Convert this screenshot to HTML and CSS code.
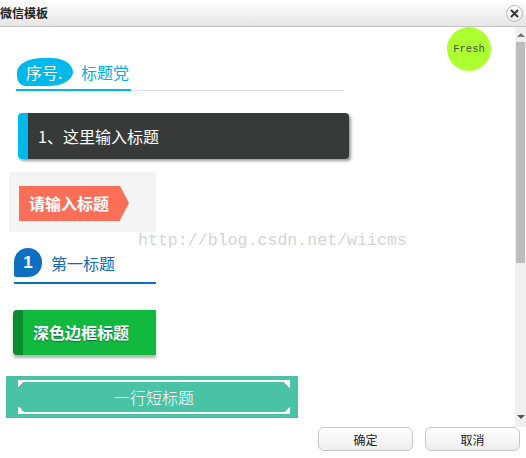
FILE: index.html
```html
<!DOCTYPE html>
<html lang="zh">

<head>
    <meta charset="UTF-8">
    <title>微信模板</title>
    <link rel="stylesheet" href="styles.css">
</head>

<body>
    <div class="dialog">
        <!-- 标题栏 -->
        <div class="dialog-head">
            <h3 class="dialog-title">微信模板</h3>
            <button type="button" class="btn-close">
                <svg width="9" height="9" viewBox="0 0 9 9">
                    <path d="M1.5 1.5 L7.5 7.5 M7.5 1.5 L1.5 7.5" stroke="#333" stroke-width="2" stroke-linecap="round" />
                </svg>
            </button>
        </div>

        <div class="dialog-body">
            <div class="content">
                <span class="fresh">Fresh</span>
                <span class="watermark">http://blog.csdn.net/wiicms</span>

                <!-- 序号 + 标题 -->
                <div class="tpl-num">
                    <div class="tpl-num-head">
                        <span class="tpl-num-pill">序号.</span>
                        <span class="tpl-num-text">标题党</span>
                    </div>
                </div>

                <!-- 深色标题 -->
                <div class="tpl-dark">1、这里输入标题</div>

                <!-- 箭头标签 -->
                <div class="tpl-tag">
                    <span class="tpl-tag-label">请输入标题</span>
                </div>

                <!-- 数字标题 -->
                <div class="tpl-first">
                    <span class="tpl-first-badge">1</span>
                    <span class="tpl-first-text">第一标题</span>
                </div>

                <!-- 深色边框标题 -->
                <div class="tpl-green">深色边框标题</div>

                <!-- 一行短标题 -->
                <div class="tpl-line">
                    <div class="tpl-line-frame">一行短标题</div>
                </div>
            </div>

            <!-- 滚动条 -->
            <div class="scrollbar">
                <span class="scroll-arrow up"></span>
                <span class="scroll-thumb"></span>
                <span class="scroll-arrow down"></span>
            </div>
        </div>

        <div class="dialog-foot">
            <button type="button" class="btn">确定</button>
            <button type="button" class="btn">取消</button>
        </div>
    </div>
</body>

</html>
```

FILE: styles.css
```css
html,
body {
    margin: 0;
    padding: 0;
    background: #fff;
}

body {
    font-family: "Noto Sans CJK SC", "Liberation Sans", sans-serif;
}

button {
    cursor: pointer;
    font-family: inherit;
}

.dialog {
    width: 526px;
    height: 458px;
    display: flex;
    flex-direction: column;
    overflow: hidden;
}

/* 标题栏 */
.dialog-head {
    height: 26px;
    border-bottom: 1px solid #c4c4c4;
    background: linear-gradient(#ffffff, #e6e6e6);
    display: flex;
    align-items: center;
    justify-content: space-between;
    padding-right: 3px;
}

.dialog-title {
    margin: 0;
    font-size: 12px;
    font-weight: bold;
    color: #222;
    line-height: 26px;
}

.btn-close {
    width: 17px;
    height: 17px;
    border-radius: 50%;
    border: 1px solid #b4b4b4;
    background: linear-gradient(#ffffff, #ececec);
    padding: 0;
    display: flex;
    align-items: center;
    justify-content: center;
}

/* 内容区 */
.dialog-body {
    height: 400px;
    display: flex;
}

.content {
    position: relative;
    flex: 1;
    overflow: hidden;
}

.fresh {
    position: absolute;
    top: 0;
    left: 447px;
    width: 44px;
    height: 44px;
    border-radius: 50%;
    background: #adff2f;
    font-family: "Liberation Mono", monospace;
    font-size: 10.5px;
    line-height: 44px;
    text-align: center;
    color: #4a4a4a;
}

.watermark {
    position: absolute;
    top: 204px;
    left: 138px;
    font-family: "Liberation Mono", monospace;
    font-size: 16.6px;
    line-height: 20px;
    color: #d4d4d4;
    white-space: nowrap;
}

/* 序号标题 */
.tpl-num {
    width: 328px;
    margin: 31px 0 0 16px;
    border-bottom: 1px solid #e2e2e2;
}

.tpl-num-head {
    display: inline-flex;
    align-items: center;
    gap: 8px;
    padding: 0 2px 3px 1px;
    border-bottom: 2px solid #00b9ec;
    margin-bottom: -1px;
    vertical-align: bottom;
}

.tpl-num-pill {
    width: 56px;
    height: 28px;
    padding-left: 9px;
    box-sizing: border-box;
    border-radius: 26px 22px 24px 8px / 14px 14px 14px 10px;
    background: #00b9ec;
    color: #fff;
    font-size: 16px;
    line-height: 28px;
}

.tpl-num-text {
    color: #00b0e6;
    font-size: 16px;
    line-height: 28px;
}

/* 深色标题 */
.tpl-dark {
    width: 331px;
    height: 46px;
    box-sizing: border-box;
    margin: 22px 0 0 18px;
    padding-left: 10px;
    border-left: 10px solid #00b9ec;
    border-radius: 4px;
    background: #383a39;
    box-shadow: 2px 2px 3px rgba(0, 0, 0, 0.4);
    color: #fff;
    font-size: 16px;
    line-height: 46px;
}

/* 箭头标签 */
.tpl-tag {
    width: 147px;
    height: 60px;
    box-sizing: border-box;
    margin: 13px 0 0 9px;
    padding: 14px 0 0 10px;
    background: #f4f4f4;
}

.tpl-tag-label {
    position: relative;
    display: inline-block;
    width: 101px;
    height: 35px;
    box-sizing: border-box;
    padding-left: 10px;
    background: #fb6f59;
    color: #fff;
    font-size: 16px;
    font-weight: bold;
    line-height: 35px;
}

.tpl-tag-label::after {
    content: "";
    position: absolute;
    top: 0;
    left: 100%;
    border-left: 9px solid #fb6f59;
    border-top: 17.5px solid transparent;
    border-bottom: 17.5px solid transparent;
}

/* 数字标题 */
.tpl-first {
    width: 142px;
    margin: 16px 0 0 14px;
    padding-bottom: 5px;
    border-bottom: 2px solid #0c6fc0;
    display: flex;
    align-items: center;
    gap: 9px;
}

.tpl-first-badge {
    width: 28px;
    height: 29px;
    border-radius: 14px 14px 14px 2px;
    background: #0c6fc0;
    color: #fff;
    font-family: "Liberation Sans", sans-serif;
    font-size: 17px;
    font-weight: bold;
    line-height: 29px;
    text-align: center;
}

.tpl-first-text {
    color: #0c6cba;
    font-size: 16px;
}

/* 深色边框标题 */
.tpl-green {
    width: 143px;
    height: 45px;
    box-sizing: border-box;
    margin: 26px 0 0 13px;
    padding-left: 10px;
    border-left: 10px solid #0a8b2c;
    border-radius: 4px 0 0 4px;
    background: #11b93e;
    box-shadow: 0 3px 3px rgba(0, 0, 0, 0.3);
    color: #fff;
    font-size: 16px;
    font-weight: bold;
    line-height: 45px;
    text-shadow: 0 1px 1px rgba(0, 40, 80, 0.5);
}

/* 一行短标题 */
.tpl-line {
    width: 292px;
    height: 42px;
    box-sizing: border-box;
    margin: 21px 0 0 6px;
    padding: 4px 8px 4px 12px;
    background: #4ac2a6;
}

.tpl-line-frame {
    height: 34px;
    box-sizing: border-box;
    border-top: 2px solid #fff;
    border-bottom: 2px solid #fff;
    background:
        linear-gradient(135deg, #fff 50%, transparent 50%) top left / 6px 6px no-repeat,
        linear-gradient(225deg, #fff 50%, transparent 50%) top right / 6px 6px no-repeat,
        linear-gradient(45deg, #fff 50%, transparent 50%) bottom left / 6px 6px no-repeat,
        linear-gradient(315deg, #fff 50%, transparent 50%) bottom right / 6px 6px no-repeat;
    color: #fff;
    font-size: 16px;
    font-weight: 300;
    line-height: 30px;
    text-align: center;
}

/* 滚动条 */
.scrollbar {
    width: 11px;
    background: #f0f0f0;
    display: flex;
    flex-direction: column;
    align-items: center;
}

.scroll-arrow {
    width: 0;
    height: 0;
    border-left: 4px solid transparent;
    border-right: 4px solid transparent;
}

.scroll-arrow.up {
    margin: 6px 0 5px;
    border-bottom: 4px solid #777;
}

.scroll-arrow.down {
    margin: auto 0 8px;
    border-top: 4px solid #555;
}

.scroll-thumb {
    width: 9px;
    height: 221px;
    background: #bdbdbd;
}

/* 하단 버튼 */
.dialog-foot {
    flex: 1;
    display: flex;
    justify-content: flex-end;
    align-items: flex-start;
    gap: 12px;
    padding-right: 6px;
}

.btn {
    width: 95px;
    height: 24px;
    border: 1px solid #c6c6c6;
    border-radius: 6px;
    background: linear-gradient(#ffffff, #eeeeee);
    color: #222;
    font-size: 12px;
    padding: 0;
}
```
